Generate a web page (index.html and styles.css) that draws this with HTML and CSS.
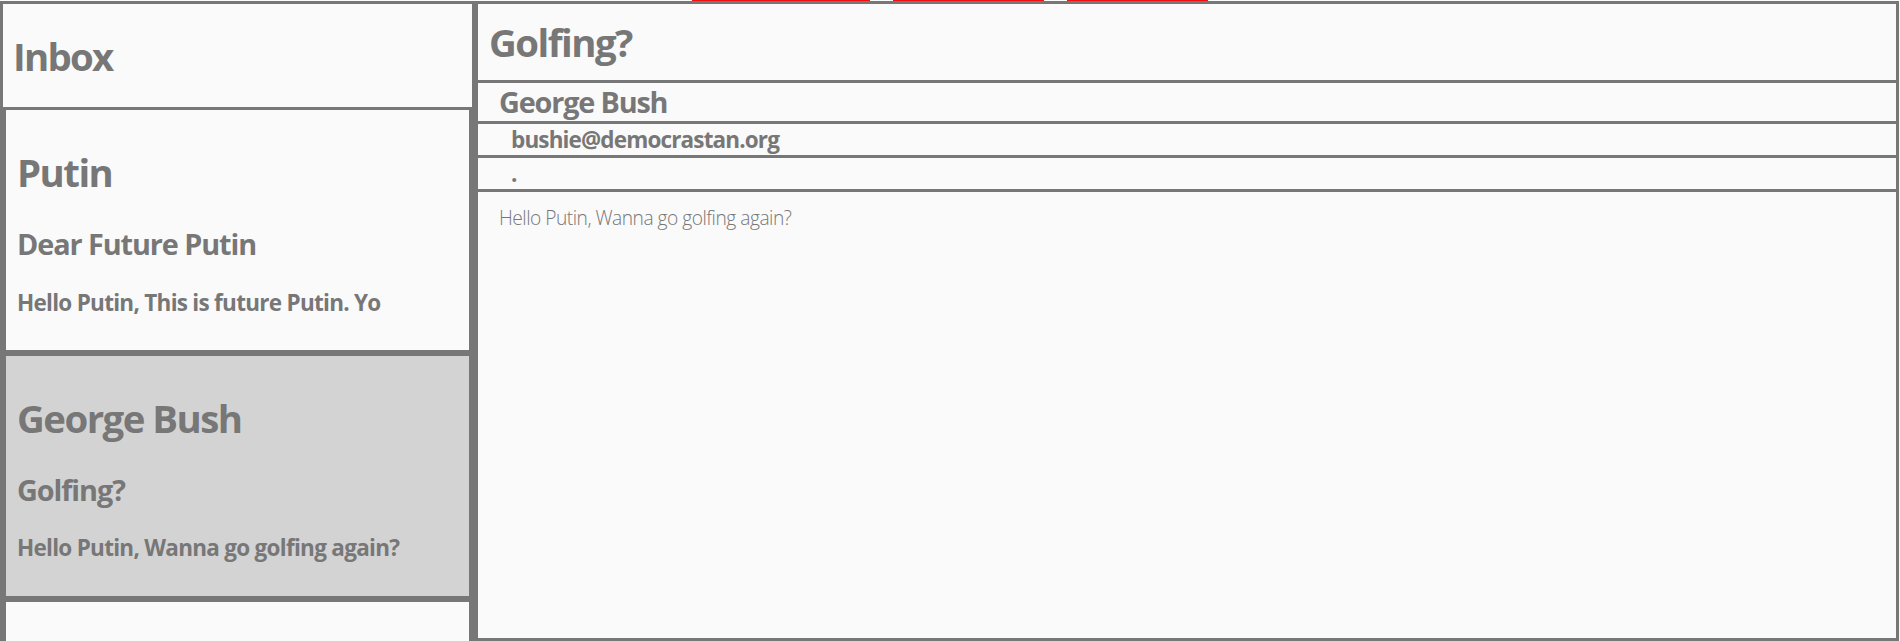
FILE: index.html
```html
<!DOCTYPE html>
<html lang="en">
<head>
<meta charset="utf-8">
<title>Inbox</title>
<link rel="stylesheet" href="styles.css">
</head>
<body>
<nav class="topnav">
  <span class="tab tab-inbox"></span>
  <span class="tab tab-compose"></span>
  <span class="tab tab-sent"></span>
</nav>
<div class="app">
  <aside class="sidebar">
    <h1 class="sidebar-title">Inbox</h1>
    <ul class="mail-list">
      <li class="mail-item">
        <h1 class="mail-sender">Putin</h1>
        <h2 class="mail-subject">Dear Future Putin</h2>
        <h3 class="mail-preview">Hello Putin, This is future Putin. Yo</h3>
      </li>
      <li class="mail-item mail-item-selected">
        <h1 class="mail-sender">George Bush</h1>
        <h2 class="mail-subject">Golfing?</h2>
        <h3 class="mail-preview">Hello Putin, Wanna go golfing again?</h3>
      </li>
      <li class="mail-item">
        <h1 class="mail-sender">Barack Obama</h1>
        <h2 class="mail-subject">Hey</h2>
        <h3 class="mail-preview">Hello Putin, How are you doing?</h3>
      </li>
    </ul>
  </aside>
  <main class="view">
    <h1 class="view-title">Golfing?</h1>
    <h2 class="view-from">George Bush</h2>
    <h3 class="view-email">bushie@democrastan.org</h3>
    <h3 class="view-date">.</h3>
    <div class="view-body">
      <p class="view-text">Hello Putin, Wanna go golfing again?</p>
    </div>
  </main>
</div>
</body>
</html>
```
FILE: styles.css
```css
html, body {
  margin: 0;
  padding: 0;
  background: #fafafa;
  color: #777777;
  font-family: "Open Sans", "DejaVu Sans", sans-serif;
  font-size: 19.2px;
  overflow: hidden;
  height: 100%;
}

.topnav {
  height: 1px;
  display: flex;
  justify-content: center;
  gap: 23px;
}

.tab {
  display: block;
  height: 1px;
  background: #ee1111;
}

.tab-inbox { width: 178px; }
.tab-compose { width: 151px; }
.tab-sent { width: 141px; }

.app {
  display: flex;
  align-items: flex-start;
}

.sidebar {
  box-sizing: border-box;
  width: 475px;
  flex: 0 0 475px;
  border: 3px solid #777777;
}

.sidebar-title {
  font-size: 38.4px;
  font-weight: 700;
  letter-spacing: -0.045em;
  margin: 25.7px 0 25.7px 10px;
}

.mail-list {
  list-style: none;
  margin: 0;
  padding: 0;
}

.mail-item {
  border: 3px solid #777777;
  padding: 10px 10px 10px 11px;
  background: #fafafa;
}

.mail-item-selected {
  background: #d3d3d3;
}

.mail-sender {
  font-size: 38.4px;
  font-weight: 700;
  letter-spacing: -0.04em;
  margin: 25.7px 0;
}

.mail-subject {
  font-size: 28.8px;
  font-weight: 700;
  letter-spacing: -0.037em;
  margin: 23.9px 0;
}

.mail-preview {
  font-size: 22.5px;
  font-weight: 700;
  letter-spacing: -0.032em;
  margin: 22.5px 0;
}

.view {
  box-sizing: border-box;
  flex: 1;
  margin-right: 1px;
  height: calc(100vh - 1px);
  border: 3px solid #777777;
  display: flex;
  flex-direction: column;
}

.view-title {
  margin: 0;
  padding: 12px 11px;
  font-size: 38.4px;
  font-weight: 700;
  letter-spacing: -0.04em;
  border-bottom: 3px solid #777777;
}

.view-from {
  margin: 0;
  padding: 0 21px;
  font-size: 28.8px;
  line-height: 38px;
  font-weight: 700;
  letter-spacing: -0.04em;
  border-bottom: 3px solid #777777;
}

.view-email,
.view-date {
  margin: 0;
  padding: 0 33px;
  font-size: 22.5px;
  line-height: 31px;
  font-weight: 700;
  letter-spacing: -0.038em;
  border-bottom: 3px solid #777777;
}

.view-body {
  flex: 1;
  padding: 12px 21px;
}

.view-text {
  margin: 0;
  font-size: 19.2px;
  font-weight: 300;
  letter-spacing: -0.026em;
}
```
